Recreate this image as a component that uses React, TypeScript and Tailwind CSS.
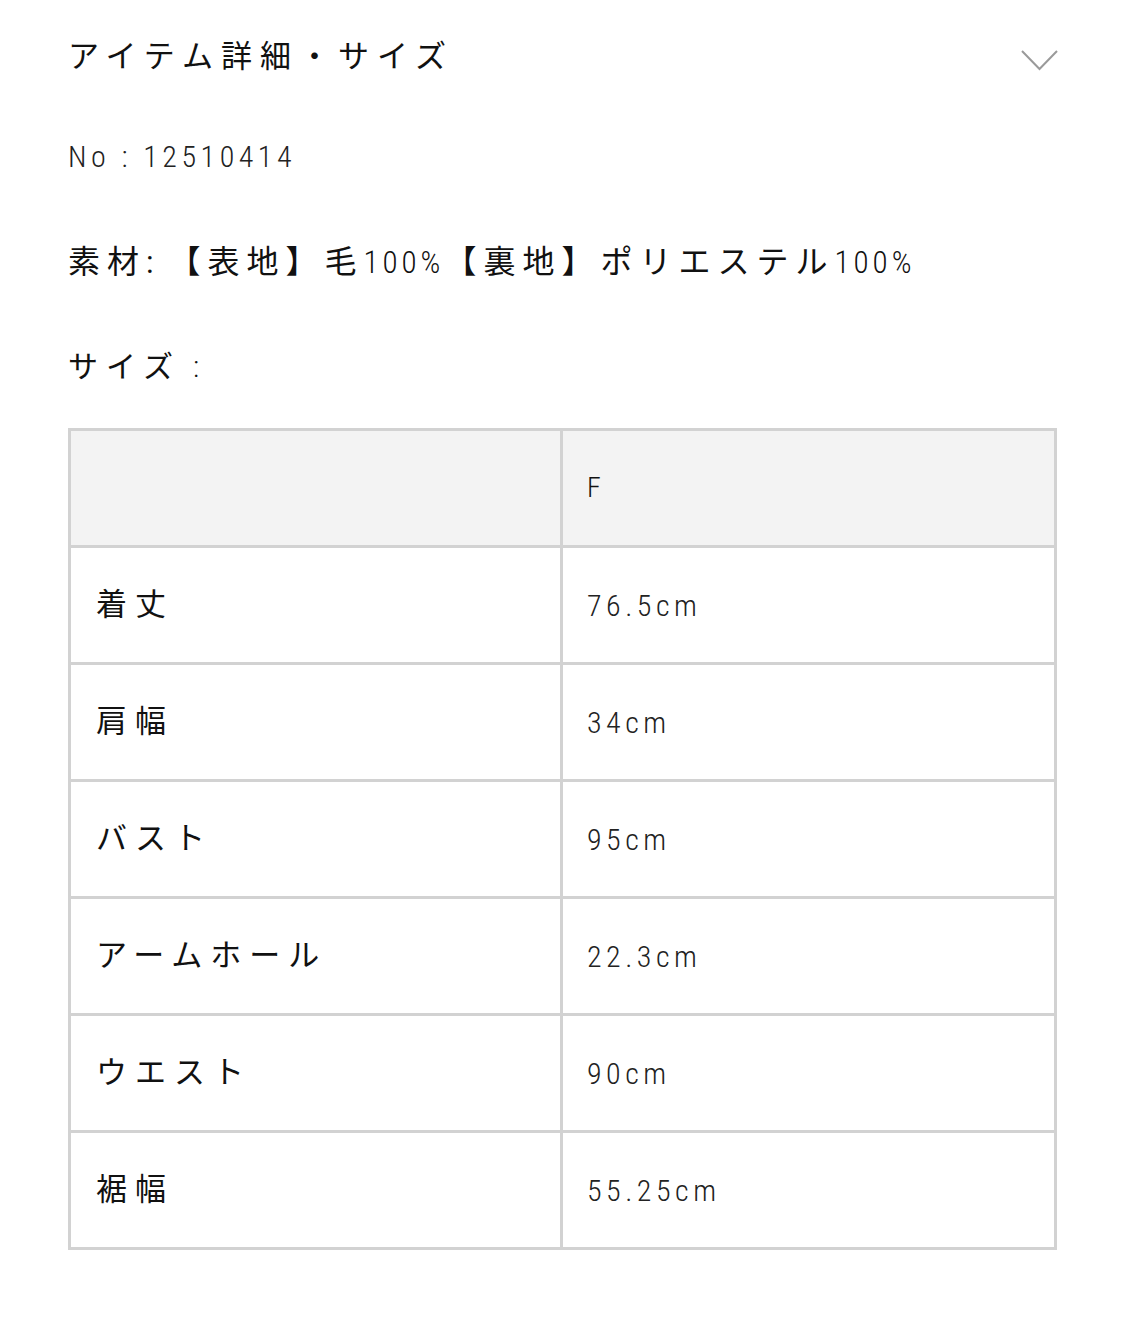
const latin = {
  fontFamily:
    '"Roboto Condensed", "DejaVu Sans Condensed", "Liberation Sans Narrow", Roboto, "Noto Sans CJK JP", sans-serif',
  fontStretch: 'condensed',
};

const jp = 'font-[\'Noto_Sans_CJK_JP\',sans-serif] tracking-[8px]';
const jpLine = 'font-[\'Noto_Sans_CJK_JP\',sans-serif] tracking-[7px] text-[32px]';

const rows = [
  { label: '着丈', value: '76.5cm' },
  { label: '肩幅', value: '34cm' },
  { label: 'バスト', value: '95cm' },
  { label: 'アームホール', value: '22.3cm' },
  { label: 'ウエスト', value: '90cm' },
  { label: '裾幅', value: '55.25cm' },
];

export default function App() {
  return (
    <div className="min-h-screen bg-white text-[#111]" style={latin}>
      <div className="px-[68px] pt-[37px]">
        <div className="flex items-center justify-between h-10">
          <h2 className={`text-[31px] leading-10 ${jp}`}>アイテム詳細・サイズ</h2>
          <svg width="37" height="22" viewBox="0 0 37 22" className="mt-[6px] mr-[-1px]">
            <path d="M1 2 L18.5 20 L36 2" fill="none" stroke="#9a9a9a" strokeWidth="2" />
          </svg>
        </div>

        <p className="mt-[60px] h-10 leading-10 text-[30px] tracking-[4.5px] font-light text-[#222]">
          No : 12510414
        </p>

        <p className="mt-[65px] h-10 leading-10 text-[31px] tracking-[4px] whitespace-nowrap">
          <span className={jpLine}>素材</span>: <span className={jpLine}>【表地】毛</span>
          <span className="font-light">100%</span>
          <span className={jpLine}>【裏地】ポリエステル</span>
          <span className="font-light">100%</span>
        </p>

        <p className="mt-[65px] h-10 leading-10 text-[30px]">
          <span className={jp}>サイズ</span>
          <span className="font-light ml-[12px]">:</span>
        </p>

        <table className="mt-[41px] w-full border-collapse border-[3px] border-[#d2d2d2]">
          <tbody>
            <tr className="h-[117px] bg-[#f3f3f3]">
              <td className="w-[492px] border-[3px] border-[#d2d2d2]" />
              <td className="border-[3px] border-[#d2d2d2] pl-[24px] text-[28px] font-light">F</td>
            </tr>
            {rows.map(r => (
              <tr key={r.label} className="h-[117px]">
                <td className={`border-[3px] border-[#d2d2d2] pl-[25px] text-[31px] ${jp}`}>{r.label}</td>
                <td className="border-[3px] border-[#d2d2d2] pl-[24px] text-[30px] tracking-[4.5px] font-light text-[#222]">
                  {r.value}
                </td>
              </tr>
            ))}
          </tbody>
        </table>
      </div>
    </div>
  );
}
